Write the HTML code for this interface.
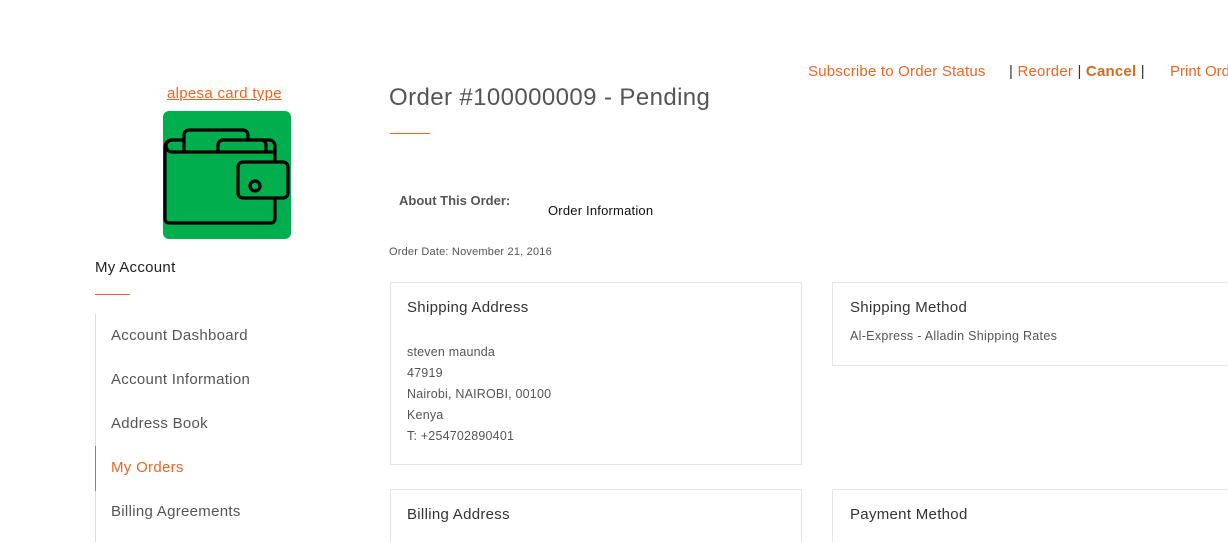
<!DOCTYPE html>
<html><head><meta charset="utf-8"><style>
html,body{margin:0;width:1228px;height:542px;overflow:hidden;background:#fff;font-family:"Liberation Sans",sans-serif;position:relative}
.a{position:absolute;white-space:nowrap}
.box{position:absolute;border:1px solid #e6e6e6;box-sizing:border-box}
.nav{position:absolute;left:111px;font-size:15px;color:#555;letter-spacing:.3px}
</style></head><body>
<div class="a" style="left:167px;top:85px;font-size:15px;color:#f26322;text-decoration:underline;letter-spacing:.3px">alpesa card type</div>
<svg class="a" style="left:163px;top:111px" width="128" height="128" viewBox="163 111 128 128">
<rect x="163" y="111" width="128" height="128" rx="6" fill="#00ae4d"/>
<g fill="#00ae4d" stroke="#000" stroke-width="3.2" stroke-linejoin="round">
<path d="M172 140 H269 a6 6 0 0 1 6 6 V219 a4 4 0 0 1 -4 4 H169 a4 4 0 0 1 -4 -4 V147 a7 7 0 0 1 7 -7 Z"/>
<path d="M184 152 V135 a5 5 0 0 1 5 -5 H243 a5 5 0 0 1 5 5 V152"/>
<path d="M218 152 V145 a5 5 0 0 1 5 -5 H261 a5 5 0 0 1 5 5 V152"/>
<path d="M172 140 a6 6 0 0 0 0 12 H275" fill="none"/>
<rect x="238" y="162" width="50" height="36" rx="5"/>
<circle cx="255" cy="186" r="5"/>
</g></svg>
<div class="a" style="left:95px;top:259px;font-size:15px;color:#222;letter-spacing:.3px">My Account</div>
<div class="a" style="left:95px;top:294px;width:35px;height:1px;background:#f26322"></div>
<div class="a" style="left:95px;top:314px;width:1px;height:228px;background:#ddd"></div>
<div class="a" style="left:95px;top:446px;width:1px;height:45px;background:#f26322"></div>
<div class="nav" style="top:327px">Account Dashboard</div>
<div class="nav" style="top:371px">Account Information</div>
<div class="nav" style="top:415px">Address Book</div>
<div class="nav" style="top:459px;color:#f26322">My Orders</div>
<div class="nav" style="top:503px">Billing Agreements</div>
<div class="a" style="left:389px;top:84px;font-size:24px;color:#555;letter-spacing:.4px">Order #100000009 - Pending</div>
<div class="a" style="left:390px;top:133px;width:40px;height:1px;background:#f26322"></div>
<div class="a" style="left:808px;top:63px;font-size:15px;color:#f26322;letter-spacing:.2px">Subscribe to Order Status</div>
<div class="a" style="left:1009px;top:63px;font-size:15px;color:#f26322;letter-spacing:.2px"><span style="color:#333">|</span> Reorder <span style="color:#333">|</span> <b style="color:#d2691e">Cancel</b> <span style="color:#333">|</span></div>
<div class="a" style="left:1170px;top:63px;font-size:15px;color:#f26322">Print Order</div>
<div class="a" style="left:399px;top:193px;font-size:13px;color:#555;font-weight:bold">About This Order:</div>
<div class="a" style="left:548px;top:203px;font-size:13px;color:#111;letter-spacing:.2px">Order Information</div>
<div class="a" style="left:389px;top:246px;font-size:11px;color:#555;letter-spacing:.2px">Order Date: November 21, 2016</div>
<div class="box" style="left:390px;top:282px;width:412px;height:183px"></div>
<div class="a" style="left:407px;top:299px;font-size:15px;color:#333;letter-spacing:.3px">Shipping Address</div>
<div class="a" style="left:407px;top:342px;font-size:12.5px;color:#555;line-height:21px;letter-spacing:.2px">steven maunda<br>47919<br>Nairobi, NAIROBI, 00100<br>Kenya<br>T: +254702890401</div>
<div class="box" style="left:832px;top:282px;width:420px;height:84px"></div>
<div class="a" style="left:850px;top:299px;font-size:15px;color:#333;letter-spacing:.3px">Shipping Method</div>
<div class="a" style="left:850px;top:329px;font-size:12.5px;color:#555;letter-spacing:.3px">Al-Express - Alladin Shipping Rates</div>
<div class="box" style="left:390px;top:489px;width:412px;height:80px"></div>
<div class="a" style="left:407px;top:506px;font-size:15px;color:#333;letter-spacing:.3px">Billing Address</div>
<div class="box" style="left:832px;top:489px;width:420px;height:80px"></div>
<div class="a" style="left:850px;top:506px;font-size:15px;color:#333;letter-spacing:.3px">Payment Method</div>
</body></html>
